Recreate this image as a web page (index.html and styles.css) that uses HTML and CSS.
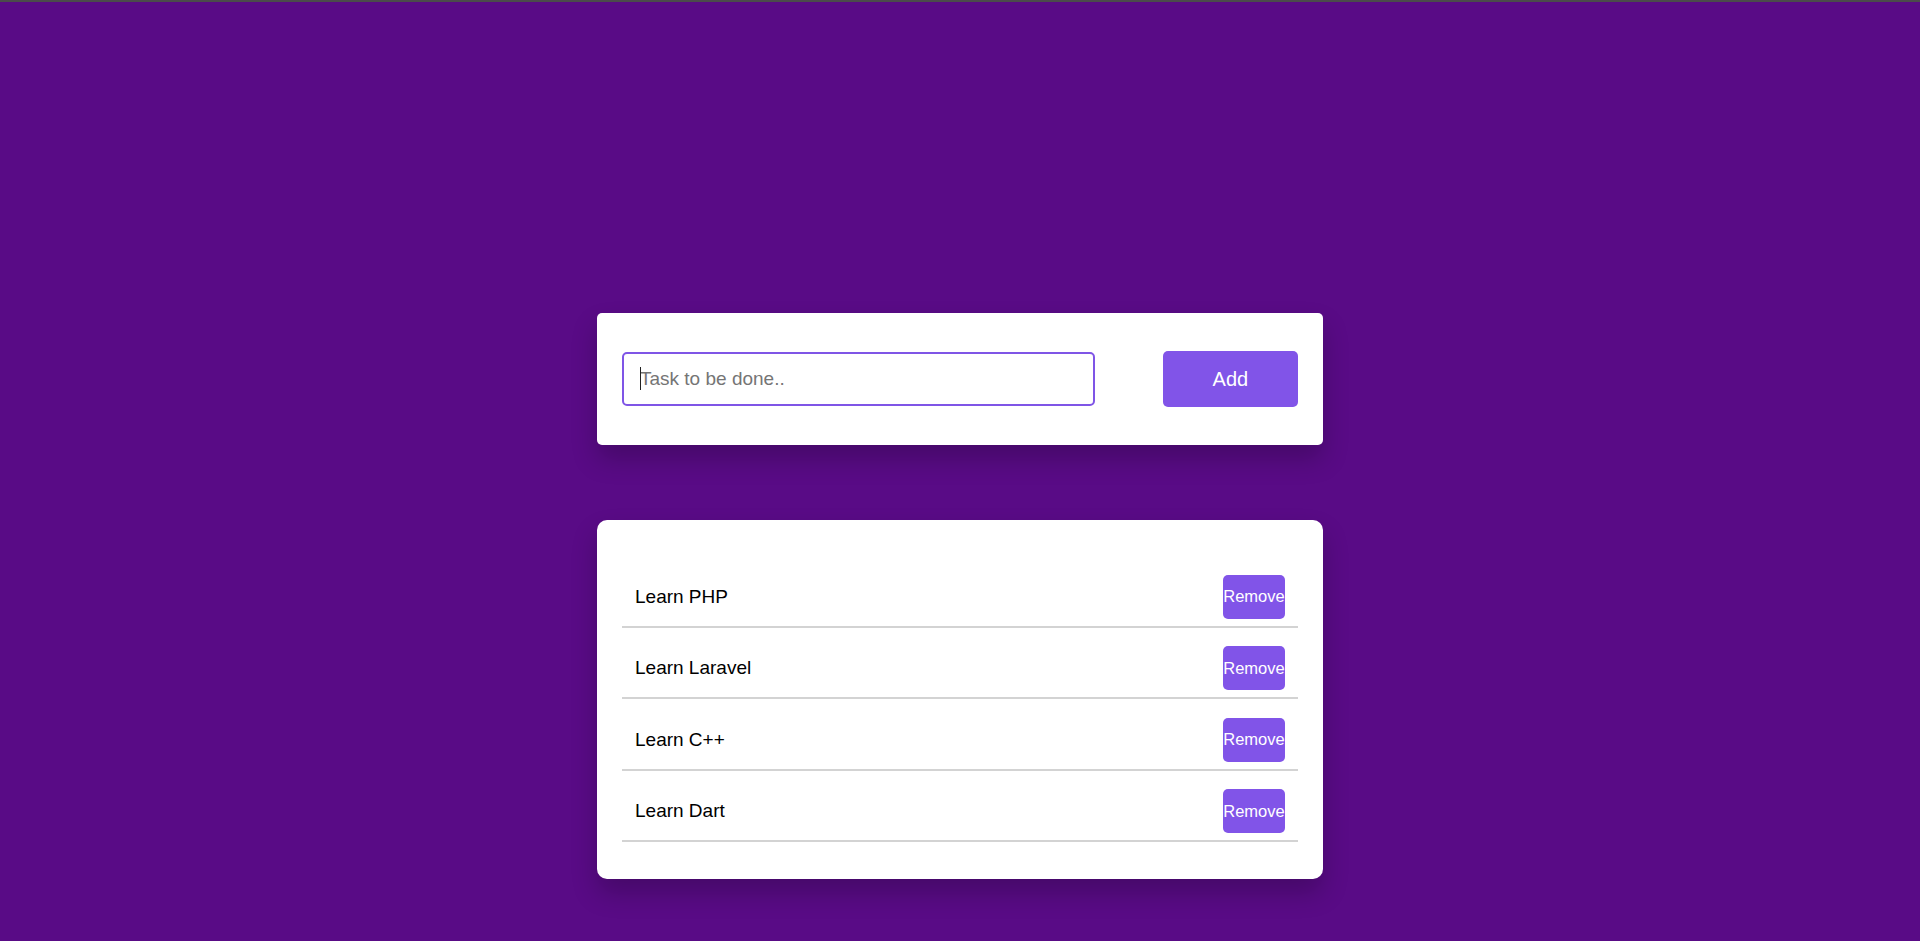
FILE: index.html
```html
<!DOCTYPE html>
<html lang="en">
<head>
<meta charset="utf-8">
<title>Todo List</title>
<link rel="stylesheet" href="styles.css">
</head>
<body>
<div class="top-strip"></div>
<main class="app">
  <section class="card card-form">
    <div class="input-wrap">
      <input class="task-input" type="text" placeholder="Task to be done..">
      <span class="caret"></span>
    </div>
    <button class="add-btn">Add</button>
  </section>
  <section class="card card-list">
    <ul class="tasks">
      <li class="task"><span class="task-name">Learn PHP</span><button class="remove-btn">Remove</button></li>
      <li class="task"><span class="task-name">Learn Laravel</span><button class="remove-btn">Remove</button></li>
      <li class="task"><span class="task-name">Learn C++</span><button class="remove-btn">Remove</button></li>
      <li class="task"><span class="task-name">Learn Dart</span><button class="remove-btn">Remove</button></li>
    </ul>
  </section>
</main>
</body>
</html>
```

FILE: styles.css
```css
* {
  box-sizing: border-box;
}

html, body {
  margin: 0;
  padding: 0;
}

body {
  background: #590b86;
  min-height: 100vh;
  font-family: "Liberation Sans", Arial, sans-serif;
  color: #000;
}

.top-strip {
  height: 2px;
  background: #4b4b4b;
}

.app {
  width: 726px;
  margin: 311px auto 0;
  display: flex;
  flex-direction: column;
  gap: 75px;
}

.card {
  background: #fff;
  box-shadow: 0 14px 26px rgba(0, 0, 0, 0.22);
}

.card-form {
  border-radius: 5px;
  padding: 38px 25px;
  display: flex;
  align-items: center;
  justify-content: space-between;
}

.input-wrap {
  position: relative;
  width: 70%;
}

.task-input {
  display: block;
  width: 100%;
  height: 54px;
  border: 2px solid #7f55e6;
  border-radius: 5px;
  padding: 0 16px;
  font-family: "Liberation Sans", Arial, sans-serif;
  font-size: 19px;
  color: #000;
  outline: none;
  background: #fff;
}

.task-input::placeholder {
  color: #757575;
}

.caret {
  position: absolute;
  left: 18px;
  top: 15px;
  width: 1px;
  height: 23px;
  background: #222;
}

.add-btn {
  width: 20%;
  height: 56px;
  border: none;
  border-radius: 5px;
  background: #8154e8;
  color: #fff;
  font-family: "Liberation Sans", Arial, sans-serif;
  font-size: 20px;
  padding: 0;
}

.card-list {
  border-radius: 10px;
  padding: 36px 25px 25px;
}

.tasks {
  list-style: none;
  margin: 0;
  padding: 0 0 12px;
}

.task {
  display: flex;
  align-items: center;
  justify-content: space-between;
  margin-top: 11.6px;
  padding: 7px 13px;
  border-bottom: 2px solid #d3d3d3;
}

.task-name {
  font-size: 19px;
}

.remove-btn {
  width: 62px;
  height: 44px;
  padding: 0;
  border: none;
  border-radius: 5px;
  background: #8154e8;
  color: #fff;
  font-family: "Liberation Sans", Arial, sans-serif;
  font-size: 16.5px;
  white-space: nowrap;
  overflow: visible;
  display: flex;
  align-items: center;
  justify-content: center;
}
```
